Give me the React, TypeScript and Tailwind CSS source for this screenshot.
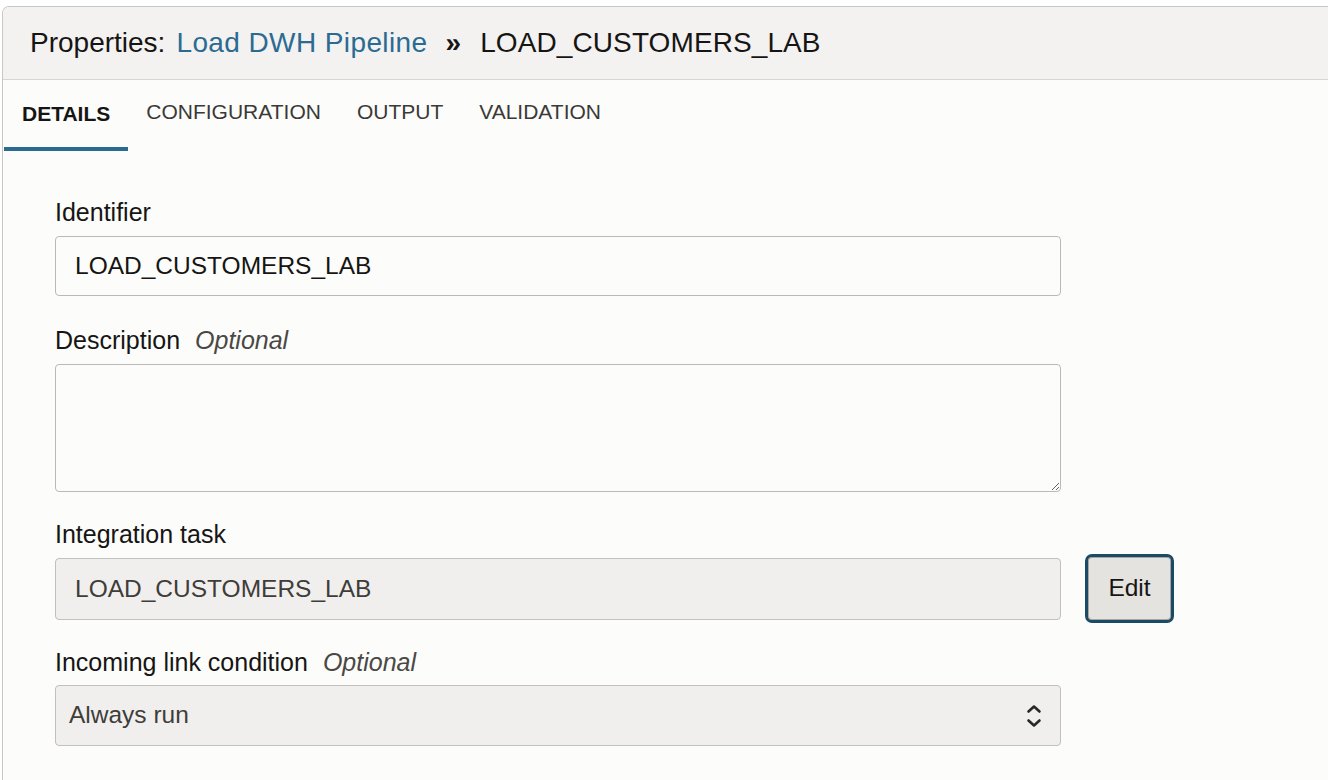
import { useState } from 'react';

export default function App() {
  const [tab, setTab] = useState('DETAILS');
  const [identifier, setIdentifier] = useState('LOAD_CUSTOMERS_LAB');
  const [description, setDescription] = useState('');
  const tabs = ['DETAILS', 'CONFIGURATION', 'OUTPUT', 'VALIDATION'];

  return (
    <div className="w-full h-[780px] bg-white pt-[6px] pl-[2px] overflow-hidden font-['Liberation_Sans',Arial,sans-serif]">
      <div className="h-full border-l border-t border-[#c9c7c4] rounded-tl-[7px] bg-[#fcfcfb] overflow-hidden">
        {/* Header */}
        <div className="h-[73px] flex items-center pl-[27px] bg-[#f3f2f1] border-b border-[#d7d5d2] text-[28px] text-[#161513] whitespace-nowrap">
          <span>Properties:</span>
          <span className="ml-[11px] text-[#2b6b92] tracking-[0.4px]">Load DWH Pipeline</span>
          <span className="ml-[18px] mr-[19px] font-bold text-[#161513]">»</span>
          <span className="tracking-[0.1px]">LOAD_CUSTOMERS_LAB</span>
        </div>

        {/* Tabs */}
        <div className="h-[71px] flex pl-[1px]">
          {tabs.map((t) => (
            <button
              key={t}
              onClick={() => setTab(t)}
              className={
                t === tab
                  ? 'px-[18px] pt-[1px] border-b-[4px] border-[#2b6b92] text-[21px] font-bold text-[#161513]'
                  : 'px-[18px] pb-[4px] border-b-[4px] border-transparent text-[21px] text-[#3b3936]'
              }
            >
              {t}
            </button>
          ))}
        </div>

        {/* Form */}
        <div className="pl-[52px] pt-[46px] text-[25px] text-[#161513]">
          <label className="block leading-[30px]">Identifier</label>
          <input
            value={identifier}
            onChange={(e) => setIdentifier(e.target.value)}
            className="mt-[9px] block w-[1006px] h-[60px] px-[19px] bg-[#fcfcfb] border border-[#bcb9b4] rounded-[4px] text-[24.5px] text-[#161513] outline-none"
          />

          <label className="mt-[29px] block leading-[30px]">
            Description
            <span className="ml-[15px] italic text-[#4a4844]">Optional</span>
          </label>
          <textarea
            value={description}
            onChange={(e) => setDescription(e.target.value)}
            className="mt-[9px] block w-[1006px] h-[128px] px-[19px] py-[10px] bg-[#fcfcfb] border border-[#bcb9b4] rounded-[4px] text-[24.5px] outline-none"
          />

          <label className="mt-[27px] block leading-[30px]">Integration task</label>
          <div className="mt-[9px] flex items-start gap-[24px] h-[62px]">
            <div className="w-[1006px] h-[62px] px-[19px] flex items-center bg-[#f0efee] border border-[#c3c0bb] rounded-[4px] text-[24.5px] text-[#3f3d3a]">
              LOAD_CUSTOMERS_LAB
            </div>
            <button className="-mt-[4px] w-[89px] h-[69px] shrink-0 rounded-[7px] border-[3px] border-[#1b4a64] bg-[#e4e3e0] text-[24.5px] text-[#161513] shadow-[inset_0_0_0_1px_#a8a6a2]">
              Edit
            </button>
          </div>

          <label className="mt-[27px] block leading-[30px]">
            Incoming link condition
            <span className="ml-[15px] italic text-[#4a4844]">Optional</span>
          </label>
          <div className="mt-[8px] w-[1006px] h-[61px] pl-[13px] pr-[18px] flex items-center justify-between bg-[#f0efee] border border-[#c3c0bb] rounded-[4px] text-[24.5px] text-[#3f3d3a]">
            <span>Always run</span>
            <svg width="16" height="26" viewBox="0 0 16 26" fill="none" stroke="#2a2826" strokeWidth="2.6" strokeLinecap="round" strokeLinejoin="round">
              <path d="M2.5 8.5 L8 3.5 L13.5 8.5" />
              <path d="M2.5 17.5 L8 22.5 L13.5 17.5" />
            </svg>
          </div>
        </div>
      </div>
    </div>
  );
}
